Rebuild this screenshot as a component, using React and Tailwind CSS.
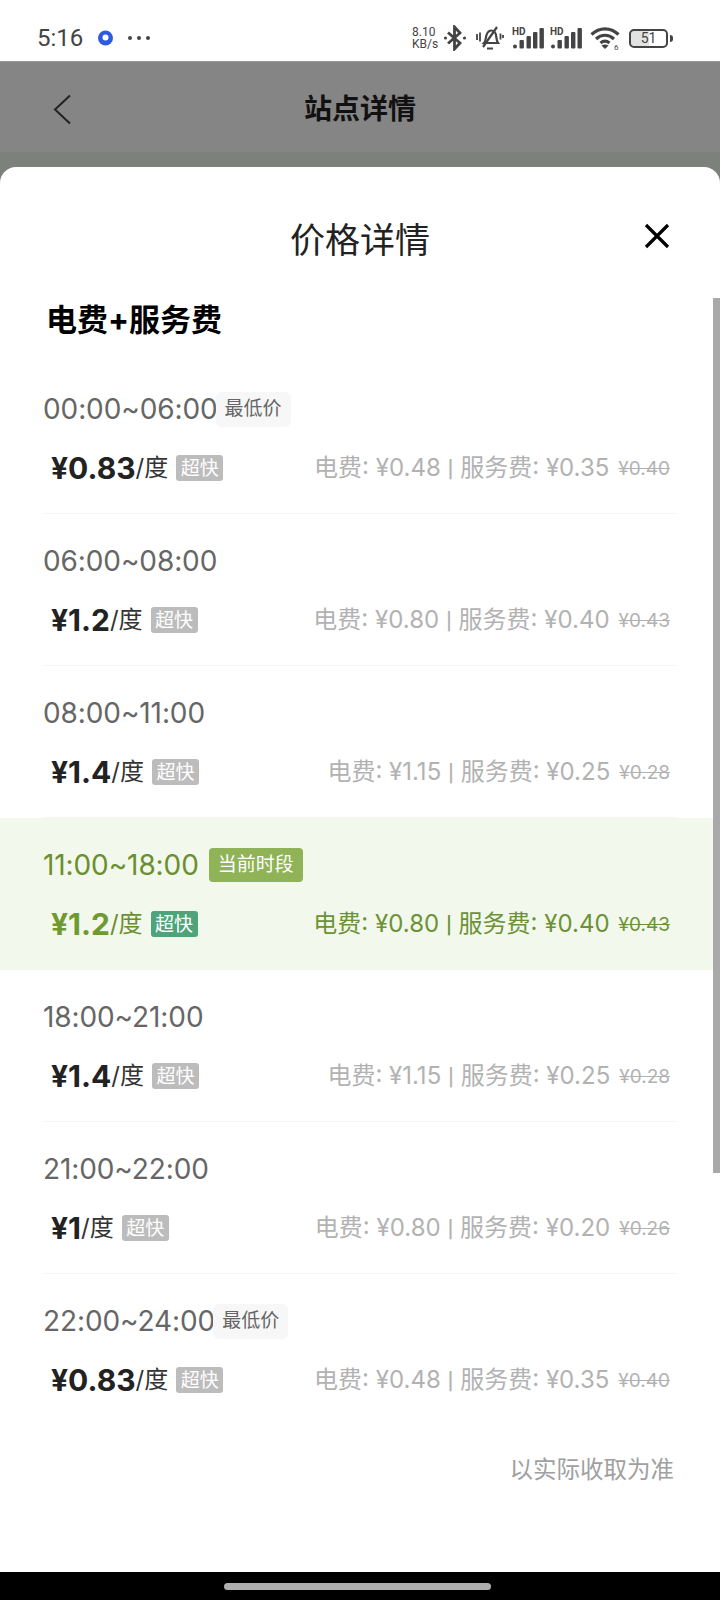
import React from 'react';

const FONT = "font-['Inter','Noto_Sans_CJK_SC',sans-serif]";

const ROWS = [
  { time: '00:00~06:00', price: '0.83', elec: '0.48', service: '0.35', old: '0.40', tag: '最低价' },
  { time: '06:00~08:00', price: '1.2', elec: '0.80', service: '0.40', old: '0.43' },
  { time: '08:00~11:00', price: '1.4', elec: '1.15', service: '0.25', old: '0.28' },
  { time: '11:00~18:00', price: '1.2', elec: '0.80', service: '0.40', old: '0.43', current: true },
  { time: '18:00~21:00', price: '1.4', elec: '1.15', service: '0.25', old: '0.28' },
  { time: '21:00~22:00', price: '1', elec: '0.80', service: '0.20', old: '0.26' },
  { time: '22:00~24:00', price: '0.83', elec: '0.48', service: '0.35', old: '0.40', tag: '最低价', last: true },
];

function SignalIcon() {
  return (
    <svg width="32" height="22" viewBox="0 0 32 22" fill="#444">
      <text x="0" y="8" fontSize="10" fontWeight="700" fontFamily="Roboto, sans-serif">HD</text>
      <circle cx="3" cy="19.500" r="2" />
      <rect x="7.500" y="13" width="4.400" height="8.500" rx="1" />
      <rect x="14.500" y="9" width="4.400" height="12.500" rx="1" />
      <rect x="21" y="5" width="4.400" height="16.500" rx="1" />
      <rect x="27.500" y="1" width="4.400" height="20.500" rx="1" />
    </svg>
  );
}

function StatusBar() {
  return (
    <div className="flex h-[61px] items-center bg-white pl-[37px] pt-[15px] font-['Roboto',sans-serif] text-[#444]">
      <span className="w-[60px] text-[24px] leading-none">5:16</span>
      <svg width="17" height="16" viewBox="0 0 17 16">
        <path d="M8.500 0.500a7.500 7.500 0 1 0 0 15a7.500 7.500 0 0 0 0-15z" fill="#2b5be0" />
        <circle cx="8.500" cy="7.500" r="3" fill="#fff" />
      </svg>
      <div className="ml-[14px] flex gap-[5px]">
        <span className="h-[4px] w-[4px] rounded-full bg-[#444]" />
        <span className="h-[4px] w-[4px] rounded-full bg-[#444]" />
        <span className="h-[4px] w-[4px] rounded-full bg-[#444]" />
      </div>
      <div className="ml-[262px] flex w-[31px] flex-col text-[12px] leading-[12px]">
        <span>8.10</span>
        <span>KB/s</span>
      </div>
      <svg width="24" height="26" viewBox="0 0 24 26" fill="none" stroke="#444" strokeWidth="2.800">
        <path d="M5 7.500l12 10.500-5.500 6V2l5.500 6L5 18.500" />
        <circle cx="2.500" cy="13" r="1.600" fill="#444" stroke="none" />
        <circle cx="21.500" cy="13" r="1.600" fill="#444" stroke="none" />
      </svg>
      <svg width="28" height="25" viewBox="0 0 28 25" className="ml-[9px]" fill="none" stroke="#444" strokeWidth="2.200">
        <path d="M8 17c2-2 1.500-5 2.500-8s3-4.500 5-4.500 4 2 4.500 4.500c.5 3 .5 6 2 8z" />
        <path d="M11 22.500h6M21 1L7 21" />
        <path d="M1 8v6M4 6.500v9M24.500 7.500v6M27 9v3" strokeWidth="1.800" />
      </svg>
      <div className="ml-[8px] flex gap-[6px]">
        <SignalIcon />
        <SignalIcon />
      </div>
      <svg width="30" height="24" viewBox="0 0 30 24" className="ml-[8px]" fill="none" stroke="#444" strokeWidth="3.200">
        <path d="M1.500 8.500c8-7.500 19-7.500 27 0" />
        <path d="M6 13c5.500-5 12.500-5 18 0" />
        <path d="M10.500 17c3-2.500 6-2.500 9 0" />
        <path d="M15 23l-3.500-3.500c2-1.500 5-1.500 7 0z" fill="#444" stroke="none" />
        <text x="24" y="23.500" fontSize="8" fill="#444" stroke="none" fontFamily="Roboto, sans-serif">6</text>
      </svg>
      <div className="ml-[9px] flex h-[19px] w-[39px] items-center justify-center rounded-[5px] border-2 border-[#444] bg-[linear-gradient(90deg,#e2e2e2_51%,#fff_51%)] text-[14px] leading-none">
        51
      </div>
      <span className="ml-[2px] h-[7px] w-[3px] rounded-r-sm bg-[#444]" />
    </div>
  );
}

function PriceRow({ row }) {
  const active = row.current;
  return (
    <div className={`h-[152px] ${active ? 'bg-[#f3f8ed]' : ''}`}>
      <div className={`mx-[43px] h-full ${row.last || active ? '' : 'border-b border-[#f5f5f5]'}`}>
        <div className="box-content flex h-9 items-center pt-[29px]">
          <span className={`text-[28px] leading-none tracking-[-0.1px] ${active ? 'text-[#6a8f2e]' : 'text-[#666]'}`}>{row.time}</span>
          {row.tag && (
            <span className="-ml-[2px] flex h-[35px] w-[75px] items-center justify-center rounded-md bg-[#f7f7f7] text-[19px] text-[#666]">{row.tag}</span>
          )}
          {active && (
            <span className="ml-[10px] flex h-[34px] w-[94px] items-center justify-center rounded-[4px] bg-[#8fb356] text-[19px] text-white">当前时段</span>
          )}
        </div>
        <div className="mt-[28px] flex h-[26px] items-center justify-between pl-[8px] pr-[7px]">
          <div className="flex items-center">
            <span className={`text-[30px] font-bold leading-none ${active ? 'text-[#6f9a2f]' : 'text-[#222]'}`}>¥{row.price}</span>
            <span className={`text-[24px] leading-none ${active ? 'text-[#6a8f2e]' : 'text-[#333]'}`}>/度</span>
            <span className={`ml-[8px] flex h-[26px] w-[47px] items-center justify-center rounded-[3px] text-[19px] leading-none text-white ${active ? 'bg-[#4fa37a]' : 'bg-[#bcbcbc]'}`}>超快</span>
          </div>
          <div className={`flex items-center text-[24px] leading-none ${active ? 'text-[#6c9236]' : 'text-[#b2b2b2]'}`}>
            <span>电费: ¥{row.elec} <span className="font-['Roboto',sans-serif] font-medium">|</span> 服务费: ¥{row.service}</span>
            <span className="ml-[9px] text-[19px] line-through">¥{row.old}</span>
          </div>
        </div>
      </div>
    </div>
  );
}

export default function App() {
  return (
    <div className={`${FONT} flex h-[1600px] w-[720px] flex-col overflow-hidden bg-black`}>
      <StatusBar />

      {/* dimmed page behind the sheet */}
      <div className="flex h-[91px] items-center border-t border-[#9a9a9a] bg-[#858585] pt-[4px]">
        <svg width="20" height="31" viewBox="0 0 20 31" className="ml-[52px]" fill="none" stroke="#222" strokeWidth="2">
          <path d="M18 1.500L3 15.500l15 14" />
        </svg>
        <span className="ml-[232px] text-[28px] font-bold leading-none text-[#111]">站点详情</span>
      </div>
      <div className="h-[15px] bg-[#7c817c]" />

      <div className="relative bg-[#7c817c]">
        <div className="relative h-[1405px] rounded-t-2xl bg-white">
          <div className="relative flex h-[50px] translate-y-[48px] items-center justify-center">
            <span className="text-[35px] leading-none text-[#222]">价格详情</span>
            <svg width="26" height="26" viewBox="0 0 26 26" className="absolute right-[50px] top-[8px]" fill="none" stroke="#000" strokeWidth="3.200">
              <path d="M2 2l22 22M24 2L2 24" />
            </svg>
          </div>
          <div className="mt-[83px] h-10 pl-[46px] text-[31px] font-bold leading-10 text-black">电费+服务费</div>
          <div className="mt-[22px]">
            {ROWS.map((row) => (
              <PriceRow key={row.time} row={row} />
            ))}
          </div>
          <div className="mt-[29px] pr-[46px] text-right text-[23.5px] leading-[30px] text-[#a0a0a0]">以实际收取为准</div>
          <div className="absolute right-0 top-[131px] h-[875px] w-[7px] bg-[#a9a9a9]" />
        </div>
      </div>

      <div className="flex flex-1 items-center justify-center pr-[5px]">
        <div className="h-[7px] w-[267px] rounded-full bg-[#aeaeae]" />
      </div>
    </div>
  );
}
